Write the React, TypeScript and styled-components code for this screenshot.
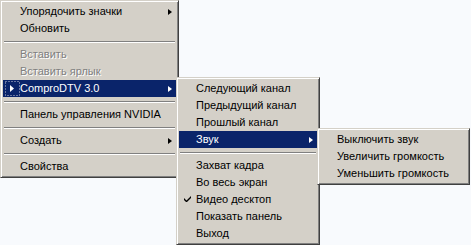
import React from 'react'
import styled, { createGlobalStyle } from 'styled-components'

const GlobalStyle = createGlobalStyle`
  html, body {
    margin: 0;
    padding: 0;
    background: #f8fafd;
  }
  body {
    font-family: "Liberation Sans", Tahoma, sans-serif;
    font-size: 11px;
  }
`

const Desktop = styled.div`
  position: relative;
  width: 471px;
  height: 245px;
  overflow: hidden;
  background: #f8fafd;
`

// popup menus lie over the desktop and over each other
const Menu = styled.div<{ x: number; y: number; w: number }>`
  position: absolute;
  left: ${({ x }) => x}px;
  top: ${({ y }) => y}px;
  width: ${({ w }) => w}px;
  box-sizing: border-box;
  display: flex;
  flex-direction: column;
  background: #d4d0c8;
  border: 1px solid;
  border-color: #d4d0c8 #404040 #404040 #d4d0c8;
  box-shadow: inset 1px 1px 0 #ffffff, inset -1px -1px 0 #808080;
  padding: 2px;
`

const Item = styled.div<{ active?: boolean; disabled?: boolean }>`
  display: flex;
  align-items: center;
  height: 17px;
  line-height: 17px;
  padding: 0 4px 0 1px;
  white-space: nowrap;
  color: ${({ active, disabled }) =>
    active ? '#ffffff' : disabled ? '#808080' : '#000000'};
  background: ${({ active }) => (active ? '#0a246a' : 'transparent')};
  text-shadow: ${({ disabled }) => (disabled ? '1px 1px 0 #ffffff' : 'none')};
`

const IconCell = styled.span`
  width: 16px;
  height: 17px;
  flex: none;
  display: flex;
  align-items: center;
  justify-content: center;
`

const Label = styled.span`
  flex: 1;
`

const Arrow = styled.span<{ active?: boolean }>`
  width: 0;
  height: 0;
  border-top: 3.5px solid transparent;
  border-bottom: 3.5px solid transparent;
  border-left: 4px solid ${({ active }) => (active ? '#ffffff' : '#000000')};
`

const Separator = styled.div`
  height: 9px;
  display: flex;
  align-items: center;
  padding: 0 1px;

  &::after {
    content: '';
    flex: 1;
    height: 0;
    border-top: 1px solid #808080;
    border-bottom: 1px solid #ffffff;
  }
`

const ComproIcon = () => (
  <svg width="15" height="15" viewBox="0 0 15 15">
    <rect
      x="0.5"
      y="0.5"
      width="14"
      height="14"
      fill="none"
      stroke="#c8c8d8"
      strokeDasharray="1 2"
    />
    <path d="M5 4 L9 7.5 L5 11 Z" fill="#ffffff" />
  </svg>
)

const CheckIcon = () => (
  <svg width="8" height="7" viewBox="0 0 8 7">
    <path d="M0 2 L0 4 L2 6 L3 6 L7 2 L7 0 L2.5 4.5 Z" fill="#000000" />
  </svg>
)

type Entry =
  | { sep: true }
  | {
      sep?: false
      label: string
      sub?: boolean
      active?: boolean
      disabled?: boolean
      icon?: 'compro' | 'check'
    }

const MenuList = ({ items }: { items: Entry[] }) => (
  <>
    {items.map((it, i) =>
      it.sep ? (
        <Separator key={i} />
      ) : (
        <Item key={i} active={it.active} disabled={it.disabled}>
          <IconCell>
            {it.icon === 'compro' && <ComproIcon />}
            {it.icon === 'check' && <CheckIcon />}
          </IconCell>
          <Label>{it.label}</Label>
          {it.sub && <Arrow active={it.active} />}
        </Item>
      )
    )}
  </>
)

const mainMenu: Entry[] = [
  { label: 'Упорядочить значки', sub: true },
  { label: 'Обновить' },
  { sep: true },
  { label: 'Вставить', disabled: true },
  { label: 'Вставить ярлык', disabled: true },
  { label: 'ComproDTV 3.0', sub: true, active: true, icon: 'compro' },
  { sep: true },
  { label: 'Панель управления NVIDIA' },
  { sep: true },
  { label: 'Создать', sub: true },
  { sep: true },
  { label: 'Свойства' },
]

const tvMenu: Entry[] = [
  { label: 'Следующий канал' },
  { label: 'Предыдущий канал' },
  { label: 'Прошлый канал' },
  { label: 'Звук', sub: true, active: true },
  { sep: true },
  { label: 'Захват кадра' },
  { label: 'Во весь экран' },
  { label: 'Видео десктоп', icon: 'check' },
  { label: 'Показать панель' },
  { label: 'Выход' },
]

const soundMenu: Entry[] = [
  { label: 'Выключить звук' },
  { label: 'Увеличить громкость' },
  { label: 'Уменьшить громкость' },
]

export default function App() {
  return (
    <>
      <GlobalStyle />
      <Desktop>
        <Menu x={0} y={0} w={179}>
          <MenuList items={mainMenu} />
        </Menu>
        <Menu x={176} y={77} w={144}>
          <MenuList items={tvMenu} />
        </Menu>
        <Menu x={317} y={128} w={153}>
          <MenuList items={soundMenu} />
        </Menu>
      </Desktop>
    </>
  )
}
